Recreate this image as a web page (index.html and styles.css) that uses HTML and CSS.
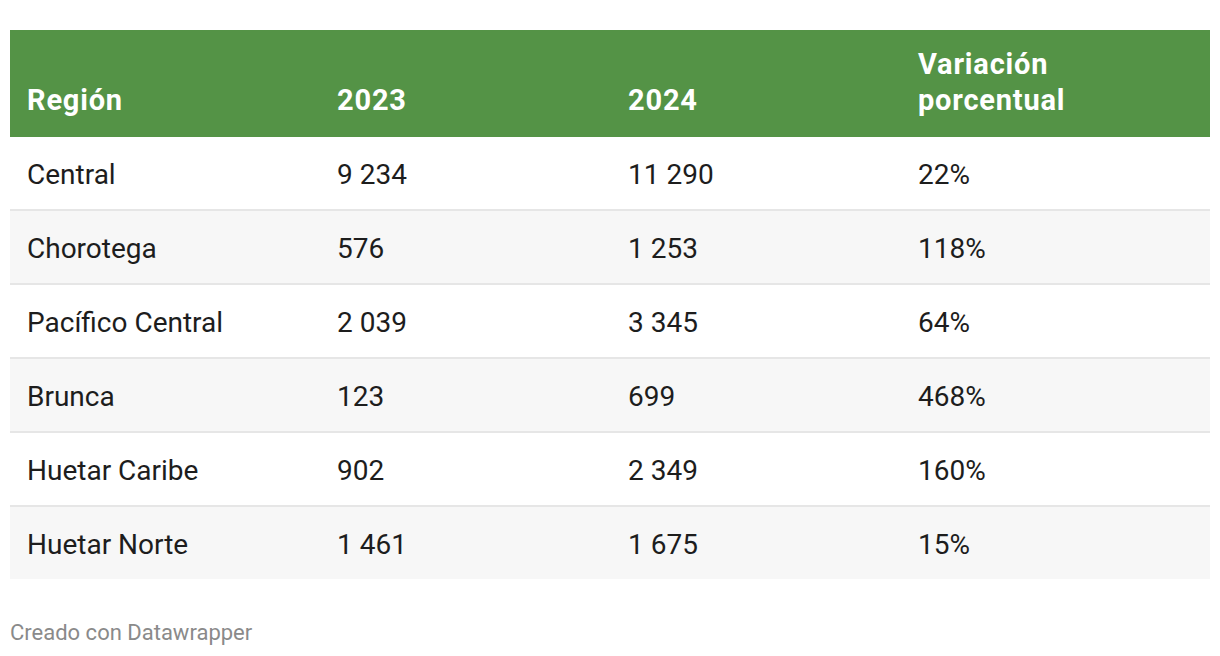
FILE: index.html
```html
<!DOCTYPE html>
<html lang="es">
<head>
<meta charset="utf-8">
<link rel="stylesheet" href="styles.css">
</head>
<body>
<div class="wrap">
<table class="dw">
<colgroup><col class="c1"><col class="c2"><col class="c3"><col class="c4"></colgroup>
<thead>
<tr><th>Región</th><th>2023</th><th>2024</th><th>Variación<br>porcentual</th></tr>
</thead>
<tbody>
<tr><td>Central</td><td>9 234</td><td>11 290</td><td>22%</td></tr>
<tr><td>Chorotega</td><td>576</td><td>1 253</td><td>118%</td></tr>
<tr><td>Pacífico Central</td><td>2 039</td><td>3 345</td><td>64%</td></tr>
<tr><td>Brunca</td><td>123</td><td>699</td><td>468%</td></tr>
<tr><td>Huetar Caribe</td><td>902</td><td>2 349</td><td>160%</td></tr>
<tr><td>Huetar Norte</td><td>1 461</td><td>1 675</td><td>15%</td></tr>
</tbody>
</table>
<div class="foot">Creado con Datawrapper</div>
</div>
</body>
</html>
```
FILE: styles.css
```css
html, body { margin: 0; padding: 0; background: #fff; }
body { font-family: Roboto, "Noto Sans", sans-serif; color: #1d1d1d; }
.wrap { padding: 30px 10px 0 10px; }
.dw { width: 1200px; border-collapse: collapse; table-layout: fixed; font-size: 28px; line-height: 36px; }
.c1 { width: 310px; }
.c2 { width: 291px; }
.c3 { width: 290px; }
.c4 { width: 309px; }
.dw th { background: #549346; color: #fff; font-weight: 700; font-size: 29px; letter-spacing: 0.8px; text-align: left; vertical-align: bottom; padding: 16px 10px 19px 17px; }
.dw td { padding: 20px 10px 16px 17px; height: 36px; text-align: left; vertical-align: middle; }
.dw tbody tr { border-bottom: 2px solid #e6e6e6; }
.dw tbody tr:last-child { border-bottom: none; }
.dw tbody tr:nth-child(even) { background: #f7f7f7; }
.foot { margin-top: 41px; font-size: 22px; line-height: 26px; color: #8a8a8a; }
```
